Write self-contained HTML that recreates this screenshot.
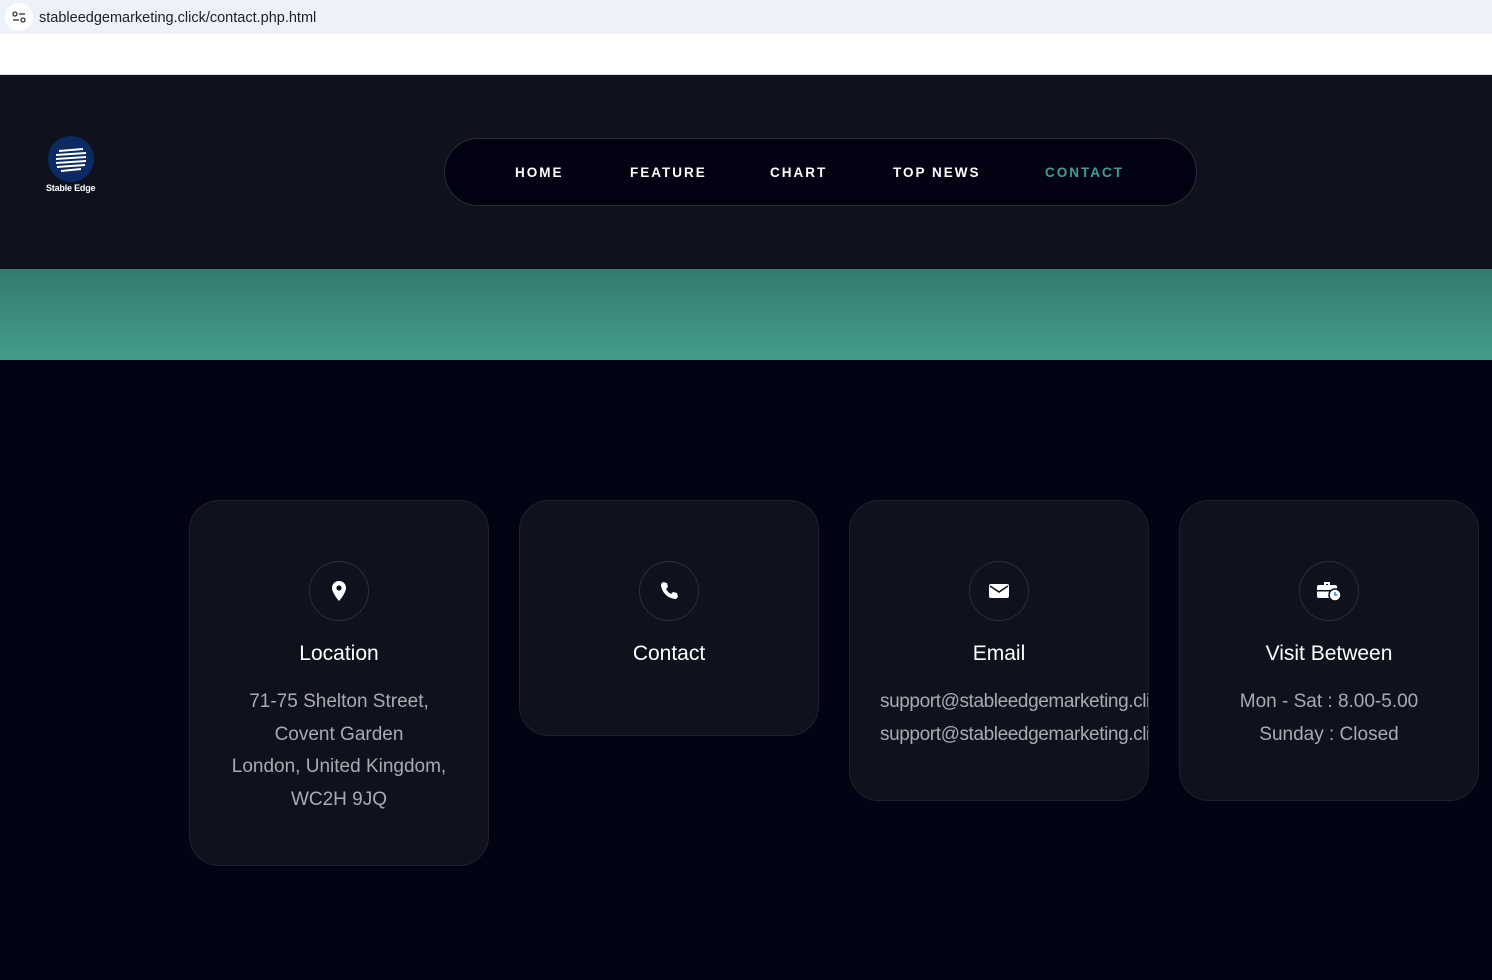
<!DOCTYPE html>
<html><head><meta charset="utf-8"><style>
*{margin:0;padding:0;box-sizing:border-box}
html,body{width:1492px;height:980px;overflow:hidden;background:#020413;font-family:"Liberation Sans",sans-serif}
.bar{height:34px;background:#edf1f9;position:relative}
.bar .url{position:absolute;left:39px;top:10px;font-size:14.5px;color:#1f1f1f}
.bar .ic{position:absolute;left:5px;top:3px;width:28px;height:28px;border-radius:14px;background:#fff}
.white{height:41px;background:#fff;border-bottom:1px solid #ddd}
.hdr{height:194px;background:#0f111c;position:relative}
.logo{position:absolute;left:48px;top:61px;width:46px;height:46px;border-radius:50%;background:#0b2a63;overflow:hidden}
.logotxt{position:absolute;left:46px;top:108px;font-size:9px;color:#fff;font-weight:bold;letter-spacing:-.2px}
.nav{position:absolute;left:444px;top:63px;width:753px;height:68px;border:1px solid #2a2d3a;border-radius:34px;background:#020212}
.nav span{position:absolute;top:26px;font-size:13.5px;font-weight:bold;letter-spacing:2px;color:#fff}
.teal{height:91px;background:linear-gradient(#337a70,#439d8c)}
.card{position:absolute;top:500px;width:300px;background:#0f111c;border:1px solid #1e2130;border-radius:30px;text-align:center;overflow:hidden}
.circ{width:60px;height:60px;border:1px solid #2a2d3a;border-radius:50%;margin:60px auto 0;display:flex;align-items:center;justify-content:center}
.card h3{color:#fff;font-size:21px;font-weight:normal;margin-top:21px;line-height:24px}
.card p{color:#a9abb3;font-size:19px;line-height:32.5px;margin-top:20px;white-space:nowrap}
</style></head><body>
<div class="bar"><div class="ic"><svg width="28" height="28"><circle cx="10" cy="11" r="2" fill="none" stroke="#333" stroke-width="1.3"/><line x1="14" y1="11" x2="20" y2="11" stroke="#333" stroke-width="1.3"/><line x1="8" y1="17" x2="14" y2="17" stroke="#333" stroke-width="1.3"/><circle cx="18" cy="17" r="2" fill="none" stroke="#333" stroke-width="1.3"/></svg></div><div class="url">stableedgemarketing.click/contact.php.html</div></div>
<div class="white"></div>
<div class="hdr">
<div class="logo"><svg width="46" height="46"><g stroke="#fff" stroke-width="2"><line x1="11" y1="15" x2="35" y2="13"/><line x1="8" y1="19" x2="38" y2="17"/><line x1="8" y1="23" x2="38" y2="21"/><line x1="8" y1="27" x2="38" y2="25"/><line x1="9" y1="31" x2="37" y2="29"/><line x1="13" y1="35" x2="33" y2="33"/></g></svg></div>
<div class="logotxt">Stable Edge</div>
<div class="nav">
<span style="left:70px">HOME</span><span style="left:185px">FEATURE</span><span style="left:325px">CHART</span><span style="left:448px">TOP NEWS</span><span style="left:600px;color:#3fa08d">CONTACT</span>
</div>
</div>
<div class="teal"></div>
<div class="card" style="left:189px;height:366px"><div class="circ"><svg width="18" height="22" viewBox="0 0 18 22"><path d="M9 1a7 7 0 0 0-7 7c0 5 7 13 7 13s7-8 7-13a7 7 0 0 0-7-7z" fill="#fff"/><circle cx="9" cy="8" r="2.6" fill="#0f111c"/></svg></div><h3>Location</h3><p>71-75 Shelton Street,<br>Covent Garden<br>London, United Kingdom,<br>WC2H 9JQ</p></div>
<div class="card" style="left:519px;height:236px"><div class="circ"><svg width="20" height="20" viewBox="0 0 20 20"><path d="M4 1l4 1 1 4-2 2c1 2 3 4 5 5l2-2 4 1 1 4-2 2C9 18 2 11 2 3z" fill="#fff"/></svg></div><h3>Contact</h3></div>
<div class="card" style="left:849px;height:301px"><div class="circ"><svg width="20" height="16" viewBox="0 0 20 16"><rect x="0" y="1" width="20" height="14" rx="2" fill="#fff"/><path d="M1 3l9 6 9-6" stroke="#0f111c" stroke-width="1.6" fill="none"/></svg></div><h3>Email</h3><p style="text-align:left;padding-left:30px;letter-spacing:-0.4px">support@stableedgemarketing.click<br>support@stableedgemarketing.click</p></div>
<div class="card" style="left:1179px;height:301px"><div class="circ"><svg width="28" height="22" viewBox="0 0 28 22"><path d="M9 2h6v3h-2V4h-2v1H9z" fill="#fff"/><rect x="2" y="5" width="20" height="13" rx="2" fill="#fff"/><rect x="2" y="10" width="20" height="1.5" fill="#0f111c"/><circle cx="20" cy="15" r="6" fill="#fff" stroke="#0f111c" stroke-width="1.5"/><path d="M20 12v3h2.5" stroke="#2a6fd0" stroke-width="1.3" fill="none"/></svg></div><h3>Visit Between</h3><p>Mon - Sat : 8.00-5.00<br>Sunday : Closed</p></div>
</body></html>
